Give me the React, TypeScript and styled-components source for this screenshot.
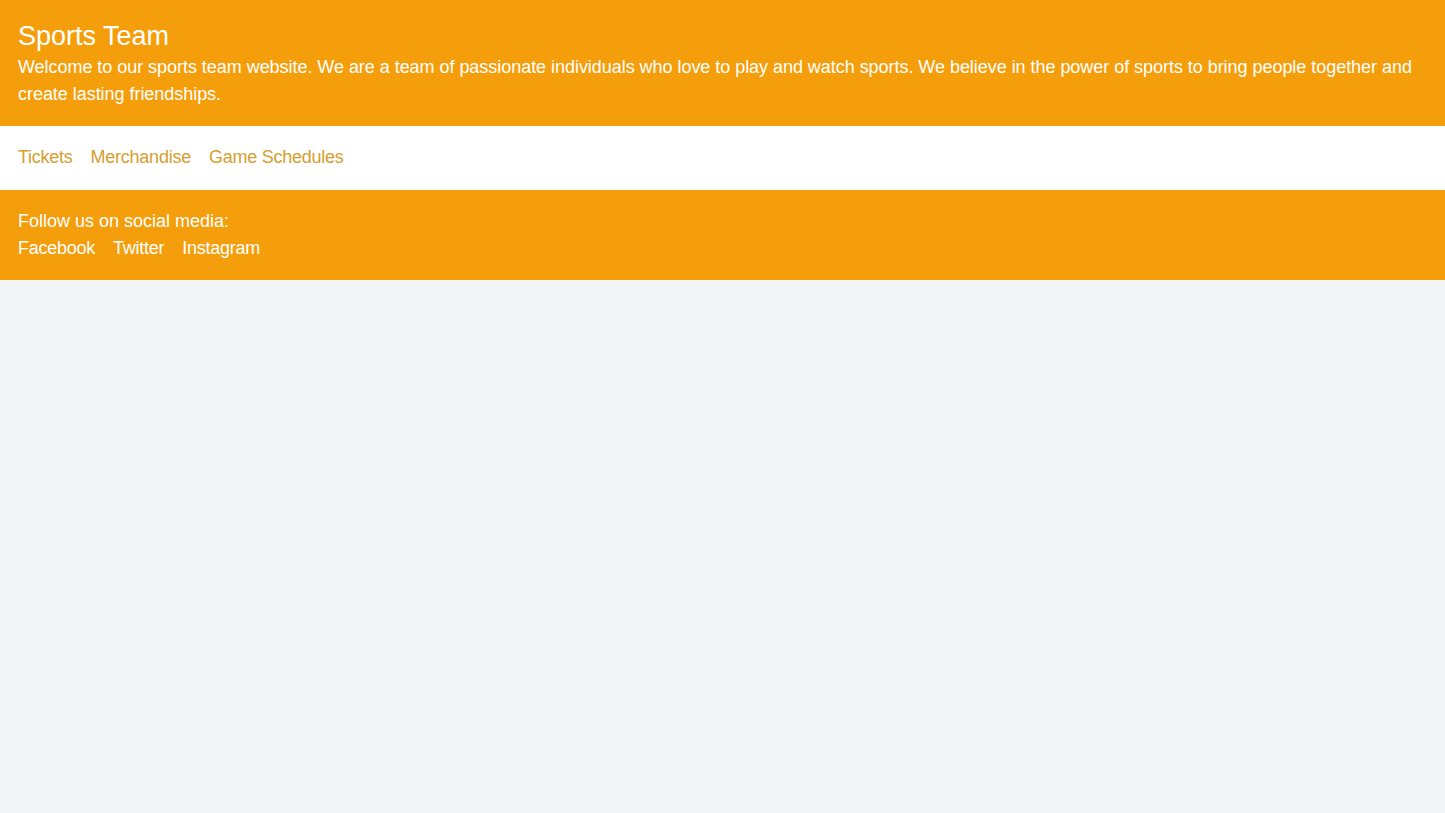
import React from "react";
import styled, { createGlobalStyle } from "styled-components";

const GlobalStyle = createGlobalStyle`
  html, body {
    margin: 0;
    padding: 0;
    background: #F3F4F6;
    font-family: "Liberation Sans", Arial, sans-serif;
    font-size: 18px;
    line-height: 27px;
  }
`;

const Header = styled.header`
  background: #F59E0B;
  color: #FFFFFF;
  padding: 18px;
`;

const Title = styled.h1`
  margin: 0;
  font-size: 27px;
  line-height: 36px;
  font-weight: 400;
`;

const Intro = styled.p`
  margin: 0;
  letter-spacing: -0.04px;
`;

const Nav = styled.nav`
  background: #FFFFFF;
  padding: 18px 18px 19px;
  display: flex;
  gap: 18px;
`;

const Footer = styled.footer`
  background: #F59E0B;
  color: #FFFFFF;
  padding: 18px;
`;

const Row = styled.div`
  display: flex;
  gap: 18px;
`;

const Link = styled.a<{ $light?: boolean }>`
  color: ${(p) => (p.$light ? "#FFFFFF" : "#D69E2E")};
  text-decoration: none;
  letter-spacing: -0.25px;
`;

export default function App() {
  return (
    <>
      <GlobalStyle />
      <Header>
        <Title>Sports Team</Title>
        <Intro>
          Welcome to our sports team website. We are a team of passionate individuals who love to play and watch
          sports. We believe in the power of sports to bring people together and create lasting friendships.
        </Intro>
      </Header>
      <Nav>
        <Link href="#">Tickets</Link>
        <Link href="#">Merchandise</Link>
        <Link href="#">Game Schedules</Link>
      </Nav>
      <Footer>
        <div>Follow us on social media:</div>
        <Row>
          <Link $light href="#">Facebook</Link>
          <Link $light href="#">Twitter</Link>
          <Link $light href="#">Instagram</Link>
        </Row>
      </Footer>
    </>
  );
}
